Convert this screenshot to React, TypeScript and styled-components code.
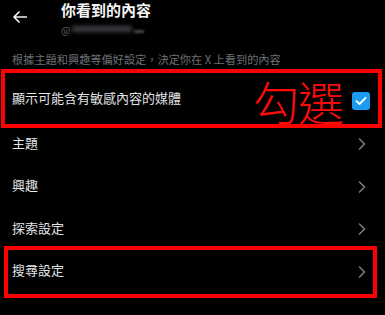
import styled, { createGlobalStyle } from "styled-components";

const GlobalStyle = createGlobalStyle`
  html, body {
    margin: 0;
    padding: 0;
    background: #000;
  }
  body {
    font-family: "Noto Sans CJK TC", "Noto Sans", sans-serif;
    color: #e7e9ea;
  }
`;

const Screen = styled.div`
  width: 385px;
  height: 315px;
  background: #000;
  overflow: hidden;
`;

const Header = styled.header`
  display: flex;
  align-items: flex-start;
  padding: 1px 0 0 13px;
  height: 36px;
`;

const BackBtn = styled.div`
  display: flex;
  align-items: center;
  width: 48px;
  height: 32px;
`;

const TitleBox = styled.div`
  display: flex;
  flex-direction: column;
  row-gap: 3px;
`;

const Title = styled.h1`
  margin: 0;
  font-size: 15px;
  line-height: 18px;
  font-weight: 700;
  color: #f5f5f5;
`;

const Handle = styled.div`
  display: flex;
  align-items: center;
  height: 14px;
  font-size: 10px;
  color: #5f6468;

  > .blur {
    width: 60px;
    height: 6px;
    margin-left: 2px;
    background: #3b3d40;
    filter: blur(2px);
  }

  > .dots {
    width: 10px;
    height: 3px;
    margin-left: 2px;
    margin-top: 4px;
    background: #44474a;
    filter: blur(1px);
  }
`;

const Desc = styled.p`
  margin: 15px 0 0 12px;
  font-size: 11.2px;
  line-height: 14px;
  color: #6c7075;
`;

const List = styled.ul`
  list-style: none;
  margin: 10px 0 0;
  padding: 0;
`;

type Mark = { top: number; bottom: number; left: number; right: number };

const Row = styled.li<{ $h: number; $mark?: Mark }>`
  position: relative;
  display: flex;
  align-items: center;
  height: ${(p) => p.$h}px;
  padding: 0 15px 0 12px;
  font-size: 13px;
  color: #e2e4e6;

  &::after {
    content: "";
    display: ${(p) => (p.$mark ? "block" : "none")};
    position: absolute;
    top: ${(p) => -(p.$mark?.top ?? 0)}px;
    bottom: ${(p) => -(p.$mark?.bottom ?? 0)}px;
    left: ${(p) => p.$mark?.left ?? 0}px;
    right: ${(p) => p.$mark?.right ?? 0}px;
    border: 4px solid #ff0000;
    pointer-events: none;
  }
`;

const Label = styled.span`
  flex: 1;
  margin-bottom: 4px;
`;

const Note = styled.span`
  font-size: 46px;
  line-height: 46px;
  font-weight: 300;
  color: #ff0a0a;
  margin: 0 9px 0 0;
  letter-spacing: -1px;
`;

const Check = styled.div`
  display: flex;
  justify-content: center;
  align-items: center;
  width: 18px;
  height: 18px;
  margin-top: 2px;
  border-radius: 3px;
  background: #1d9bf0;
`;

const Chevron = styled.svg`
  margin-right: 4px;
`;

const items = ["主題", "興趣", "探索設定", "搜尋設定"];

function App() {
  return (
    <Screen>
      <GlobalStyle />
      <Header>
        <BackBtn>
          <svg width="14" height="12" viewBox="0 0 14 12" fill="none">
            <path d="M6 1 L1 6 L6 11 M1 6 H13.5" stroke="#f2f2f2" strokeWidth="1.7" strokeLinecap="round" strokeLinejoin="round" />
          </svg>
        </BackBtn>
        <TitleBox>
          <Title>你看到的內容</Title>
          <Handle>
            @<span className="blur" />
            <span className="dots" />
          </Handle>
        </TitleBox>
      </Header>
      <Desc>根據主題和興趣等偏好設定，決定你在 X 上看到的內容</Desc>
      <List>
        <Row $h={47} $mark={{ top: 7, bottom: 5, left: 1, right: 3 }}>
          <Label>顯示可能含有敏感內容的媒體</Label>
          <Note>勾選</Note>
          <Check>
            <svg width="12" height="10" viewBox="0 0 12 10" fill="none">
              <path d="M1.5 5.2 L4.5 8 L10.5 1.8" stroke="#fff" strokeWidth="1.8" strokeLinecap="round" strokeLinejoin="round" />
            </svg>
          </Check>
        </Row>
        {items.map((t, i) => (
          <Row
            key={t}
            $h={42.5}
            $mark={i === items.length - 1 ? { top: 4.5, bottom: 5, left: 4, right: 8 } : undefined}
          >
            <Label>{t}</Label>
            <Chevron width="8" height="12" viewBox="0 0 8 12" fill="none">
              <path d="M1.5 1 L6.5 6 L1.5 11" stroke="#7a7e82" strokeWidth="1.5" strokeLinecap="round" strokeLinejoin="round" />
            </Chevron>
          </Row>
        ))}
      </List>
    </Screen>
  );
}

export default App;
